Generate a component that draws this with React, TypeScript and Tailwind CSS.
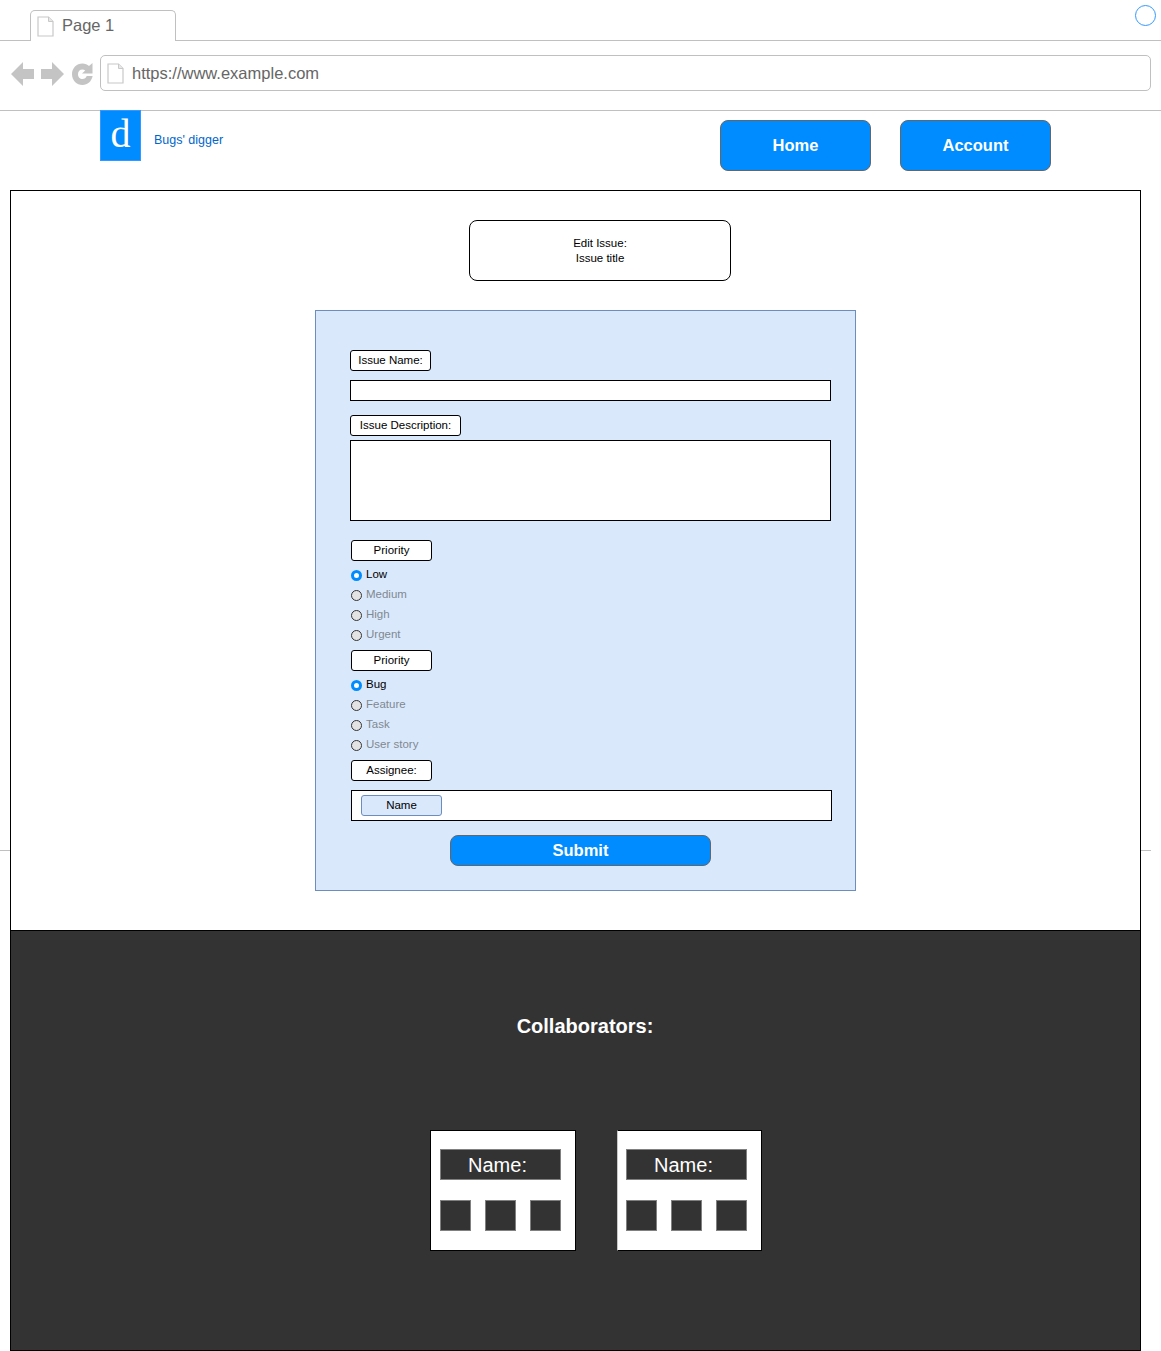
import React from "react";

function PageIcon({ className }: { className: string }) {
  return (
    <svg className={className} viewBox="0 0 17 21" fill="none">
      <path d="M1 1H11.5L16 5.5V20H1Z" fill="#fff" stroke="#c8c8c8" strokeWidth="1.2" />
      <path d="M11.5 1V5.5H16" fill="#e8e8e8" stroke="#c8c8c8" strokeWidth="1" />
    </svg>
  );
}

function Box({ className, children }: { className: string; children: React.ReactNode }) {
  return (
    <div className={`flex items-center justify-center rounded-[3px] border border-black bg-white text-[11.5px] leading-none text-black ${className}`}>
      {children}
    </div>
  );
}

function Radio({ label, checked }: { label: string; checked?: boolean }) {
  return (
    <div className="flex h-[20px] items-center text-[11.5px]">
      {checked ? (
        <span className="h-[11px] w-[11px] rounded-full border-[3px] border-[#008cff] bg-white" />
      ) : (
        <span className="h-[11px] w-[11px] rounded-full border border-[#333333] bg-[#e3e3e3]" />
      )}
      <span className={`ml-[4px] ${checked ? "text-black" : "text-[#808890]"}`}>{label}</span>
    </div>
  );
}

function HeaderButton({ label }: { label: string }) {
  return (
    <div className="flex h-[51px] w-[151px] items-center justify-center rounded-[8px] border border-[#666666] bg-[#008cff] text-[16.5px] font-bold text-white">
      {label}
    </div>
  );
}

function Card({ className }: { className: string }) {
  return (
    <div className={`h-[121px] border border-black bg-white pt-[18px] ${className}`}>
      <div className="flex h-[31px] w-[121px] items-center justify-center border border-[#808080] bg-[#333333] pr-[6px] text-[20px] text-white">
        Name:
      </div>
      <div className="mt-[20px] flex gap-[14px]">
        <div className="h-[31px] w-[31px] border border-[#808080] bg-[#333333]" />
        <div className="h-[31px] w-[31px] border border-[#808080] bg-[#333333]" />
        <div className="h-[31px] w-[31px] border border-[#808080] bg-[#333333]" />
      </div>
    </div>
  );
}

export default function App() {
  return (
    <div className="relative h-[1351px] w-[1161px] overflow-hidden bg-white font-['Liberation_Sans',sans-serif]">
      <div className="flex h-[41px] border-b border-[#c0c0c0]">
        <div className="ml-[30px] mt-[10px] flex h-[31px] w-[146px] items-start rounded-t-[5px] border border-b-0 border-[#c0c0c0] bg-white pl-[6px] pt-[5px]">
          <PageIcon className="h-[21px] w-[17px]" />
          <span className="ml-[8px] text-[16.5px] leading-[18px] text-[#666666]">Page 1</span>
        </div>
        <div className="ml-auto mr-[5px] mt-[5px] h-[21px] w-[21px] rounded-full border-[1.5px] border-[#3399ff]" />
      </div>

      <div className="flex h-[70px] items-start border-b border-[#c0c0c0] pl-[11px] pt-[14px]">
        <svg className="mt-[6px] h-[26px] w-[83px]" viewBox="0 0 83 26" fill="#c4c4c4">
          <path d="M0 13L12 1V8H23V18H12V25Z" />
          <path d="M53 13L41 1V8H30V18H41V25Z" />
          <path d="M71.5 2.5C74 2.5 76.4 3.4 78 5L81.5 2V12.5H71L74.2 9.4C73.4 8.8 72.5 8.5 71.5 8.5C68.8 8.5 67 10.5 67 13.2C67 15.9 68.9 18 71.5 18C73.6 18 75 16.9 75.7 15H81.6C80.6 20.2 76.6 24 71.5 24C65.6 24 61 19.2 61 13.2C61 7.2 65.6 2.5 71.5 2.5Z" />
        </svg>
        <div className="ml-[6px] flex h-[36px] w-[1051px] items-center rounded-[5px] border border-[#c0c0c0] pl-[6px]">
          <PageIcon className="h-[21px] w-[17px]" />
          <span className="ml-[8px] text-[16.5px] text-[#666666]">https://www.example.com</span>
        </div>
      </div>

      <div className="flex h-[79px] items-start">
        <div className="-mt-px ml-[100px] flex h-[51px] w-[41px] items-start justify-center border border-[#3399ff] bg-[#008cff] font-['Liberation_Serif',serif] text-[40px] leading-[46px] text-white">
          d
        </div>
        <span className="ml-[13px] mt-[22px] text-[12.5px] leading-[15px] text-[#0066cc]">Bugs' digger</span>
        <div className="ml-auto mr-[110px] mt-[9px] flex gap-[29px]">
          <HeaderButton label="Home" />
          <HeaderButton label="Account" />
        </div>
      </div>

      <div className="absolute left-0 top-[850px] h-px w-[10px] bg-[#c0c0c0]" />
      <div className="absolute left-[1141px] top-[850px] h-px w-[10px] bg-[#c0c0c0]" />

      <div className="ml-[10px] flex h-[1161px] w-[1131px] flex-col border border-black">
        <div className="h-[739px] pt-[29px]">
          <div className="ml-[458px] flex h-[61px] w-[262px] items-center justify-center rounded-[8px] border border-black text-center text-[11.5px] leading-[15px] text-black">
            Edit Issue:
            <br />
            Issue title
          </div>
          <div className="ml-[304px] mt-[29px] h-[581px] w-[541px] border border-[#6c8ebf] bg-[#dae8fc] pl-[34px] pt-[39px]">
            <Box className="h-[21px] w-[81px]">Issue Name:</Box>
            <div className="mt-[9px] h-[21px] w-[481px] border border-black bg-white" />
            <Box className="mt-[14px] h-[21px] w-[111px]">Issue Description:</Box>
            <div className="mt-[4px] h-[81px] w-[481px] border border-black bg-white" />
            <div className="ml-px mt-[19px]">
              <Box className="h-[21px] w-[81px]">Priority</Box>
              <div className="mt-[4px]">
                <Radio label="Low" checked />
                <Radio label="Medium" />
                <Radio label="High" />
                <Radio label="Urgent" />
              </div>
              <Box className="mt-[5px] h-[21px] w-[81px]">Priority</Box>
              <div className="mt-[4px]">
                <Radio label="Bug" checked />
                <Radio label="Feature" />
                <Radio label="Task" />
                <Radio label="User story" />
              </div>
              <Box className="mt-[5px] h-[21px] w-[81px]">Assignee:</Box>
              <div className="mt-[9px] flex h-[31px] w-[481px] items-center border border-black bg-white pl-[9px]">
                <div className="flex h-[21px] w-[81px] items-center justify-center rounded-[3px] border border-[#6c8ebf] bg-[#dae8fc] text-[11.5px] text-black">
                  Name
                </div>
              </div>
            </div>
            <div className="ml-[100px] mt-[14px] flex h-[31px] w-[261px] items-center justify-center rounded-[8px] border border-[#666666] bg-[#008cff] text-[16.5px] font-bold text-white">
              Submit
            </div>
          </div>
        </div>

        <div className="flex-1 border-t border-black bg-[#333333]">
          <div className="mt-[84px] pl-[19px] text-center text-[20px] font-bold leading-[23px] text-white">Collaborators:</div>
          <div className="ml-[419px] mt-[92px] flex">
            <Card className="w-[146px] pl-[9px]" />
            <Card className="ml-[41px] w-[145px] border-l-[#c8c8c8] pl-[8px]" />
          </div>
        </div>
      </div>
    </div>
  );
}
